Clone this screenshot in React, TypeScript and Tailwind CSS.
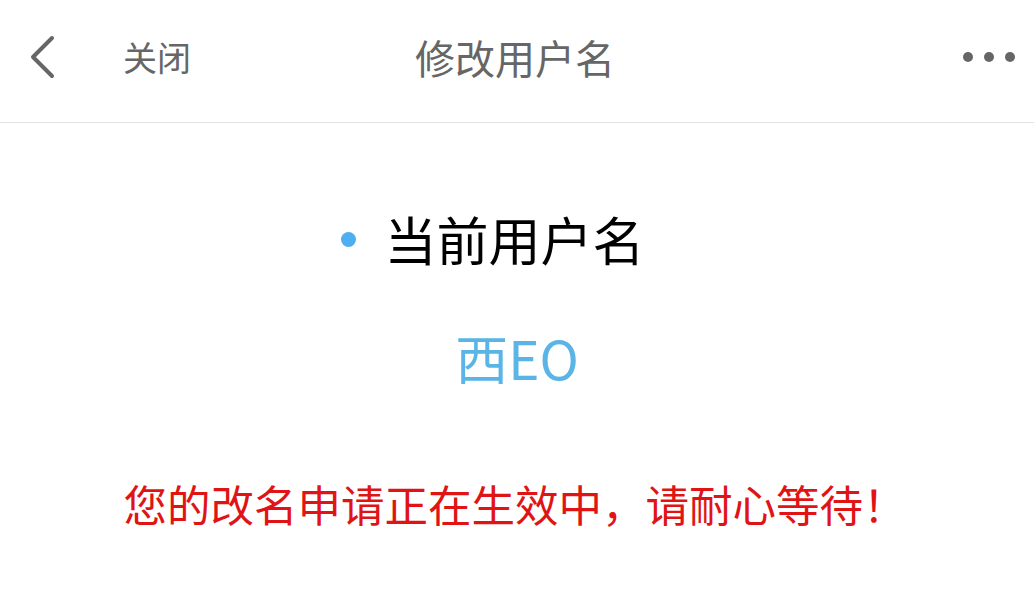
import React from "react";

const cjk = "font-['Noto_Sans_CJK_SC','Noto_Sans',sans-serif]";

export default function App() {
  return (
    <div className={`min-h-screen w-full bg-white ${cjk}`}>
      {/* Header */}
      <div className="grid h-[123px] grid-cols-[1fr_auto_1fr] items-center border-b border-[#e2e2e2] pb-[8px]">
        <div className="flex items-center pl-[28px]">
          <svg width="28" height="44" viewBox="0 0 28 44" fill="none">
            <path
              d="M24 3 L5 22 L24 41"
              stroke="#666666"
              strokeWidth="4"
              strokeLinecap="round"
              strokeLinejoin="round"
            />
          </svg>
          <span className="ml-[67px] text-[34px] leading-none text-[#666666]">
            关闭
          </span>
        </div>

        <div className="pr-[4px] text-[40px] leading-none text-[#666666]">
          修改用户名
        </div>

        <div className="flex items-center justify-end gap-[11px] pr-[19px]">
          <span className="h-[10px] w-[10px] rounded-full bg-[#666666]" />
          <span className="h-[10px] w-[10px] rounded-full bg-[#666666]" />
          <span className="h-[10px] w-[10px] rounded-full bg-[#666666]" />
        </div>
      </div>

      {/* Content */}
      <div className="flex flex-col items-center">
        <div className="mt-[90px] flex items-center pr-[48px]">
          <span className="h-[15px] w-[15px] rounded-full bg-[#4daef0]" />
          <span className="ml-[28px] text-[52px] leading-none text-black">
            当前用户名
          </span>
        </div>

        <div className="mt-[66px] text-[53px] leading-none text-[#5ab5e6]">
          西EO
        </div>

        <div className="mt-[98px] pr-[4px] text-[43.5px] leading-none text-[#e01414]">
          您的改名申请正在生效中，请耐心等待！
        </div>
      </div>
    </div>
  );
}
